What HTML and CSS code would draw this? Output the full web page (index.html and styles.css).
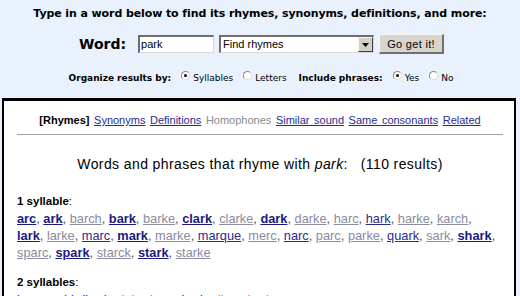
FILE: index.html
```html
<!DOCTYPE html>
<html>
<head>
<meta charset="utf-8">
<link rel="stylesheet" href="styles.css">
</head>
<body>
<div class="top">
  <div class="title">Type in a word below to find its rhymes, synonyms, definitions, and more:</div>
  <div class="searchrow">
    <span class="label">Word:</span>
    <span class="textbox">park</span>
    <span class="select"><span class="seltext">Find rhymes</span><span class="selbtn"><svg width="7" height="4" viewBox="0 0 7 4"><path d="M0 0H7L3.5 4Z" fill="#000"/></svg></span></span>
    <span class="button">Go get it!</span>
  </div>
  <div class="optrow">
    <span class="optlabel">Organize results by:</span>
    <span class="opt"><span class="radio on"></span>Syllables</span>
    <span class="opt"><span class="radio"></span>Letters</span>
    <span class="optlabel second">Include phrases:</span>
    <span class="opt"><span class="radio on"></span>Yes</span>
    <span class="opt"><span class="radio"></span>No</span>
  </div>
</div>
<div class="results">
  <div class="nav">
    <b class="current">[Rhymes]</b>
    <a class="navlink" href="#">Synonyms</a>
    <a class="navlink" href="#">Definitions</a>
    <span class="navoff">Homophones</span>
    <a class="navlink" href="#">Similar sound</a>
    <a class="navlink" href="#">Same consonants</a>
    <a class="navlink" href="#">Related</a>
  </div>
  <div class="sep"></div>
  <div class="heading">Words and phrases that rhyme with <i>park</i>: &nbsp;&nbsp;(110 results)</div>
  <div class="group">
    <div class="glabel"><b>1 syllable</b>:</div>
    <div class="words"><a class="w1" href="#">arc</a>, <a class="w1" href="#">ark</a>, <a class="w3" href="#">barch</a>, <a class="w1" href="#">bark</a>, <a class="w3" href="#">barke</a>, <a class="w1" href="#">clark</a>, <a class="w3" href="#">clarke</a>, <a class="w1" href="#">dark</a>, <a class="w3" href="#">darke</a>, <a class="w3" href="#">harc</a>, <a class="w2" href="#">hark</a>, <a class="w3" href="#">harke</a>, <a class="w3" href="#">karch</a>,<br><a class="w1" href="#">lark</a>, <a class="w3" href="#">larke</a>, <a class="w2" href="#">marc</a>, <a class="w1" href="#">mark</a>, <a class="w3" href="#">marke</a>, <a class="w2" href="#">marque</a>, <a class="w3" href="#">merc</a>, <a class="w2" href="#">narc</a>, <a class="w3" href="#">parc</a>, <a class="w3" href="#">parke</a>, <a class="w2" href="#">quark</a>, <a class="w3" href="#">sark</a>, <a class="w1" href="#">shark</a>,<br><a class="w3" href="#">sparc</a>, <a class="w1" href="#">spark</a>, <a class="w3" href="#">starck</a>, <a class="w1" href="#">stark</a>, <a class="w3" href="#">starke</a></div>
  </div>
  <div class="group">
    <div class="glabel"><b>2 syllables</b>:</div>
    <div class="words"><a class="w2" href="#">barque</a>, <a class="w2" href="#">birdbark</a>, <a class="w3" href="#">debark</a>, <a class="w2" href="#">embark</a>, <a class="w3" href="#">disembark</a></div>
  </div>
</div>
</body>
</html>
```
FILE: styles.css
```css
html, body {
  margin: 0;
  padding: 0;
}
body {
  background: #e8f1fc;
  font-family: "DejaVu Sans", Verdana, sans-serif;
  color: #000;
  width: 520px;
  height: 296px;
  overflow: hidden;
}
.top {
  display: flex;
  flex-direction: column;
  align-items: center;
}
.title {
  font-weight: bold;
  font-size: 11px;
  line-height: 14px;
  margin-top: 7px;
  letter-spacing: -0.1px;
}
.searchrow {
  display: flex;
  align-items: center;
  margin-top: 13px;
  height: 20px;
  padding-left: 3px;
}
.label {
  font-weight: bold;
  font-size: 14px;
  margin-right: 12px;
}
.textbox {
  box-sizing: border-box;
  width: 76px;
  height: 18px;
  background: #fff;
  border-top: 2px solid #6e6e6e;
  border-left: 2px solid #6e6e6e;
  border-bottom: 1px solid #d8d8d8;
  border-right: 1px solid #d8d8d8;
  font-family: "Liberation Sans", Arial, sans-serif;
  font-size: 11px;
  line-height: 14px;
  padding-left: 1px;
  margin-right: 5px;
}
.select {
  box-sizing: border-box;
  width: 155px;
  height: 18px;
  background: #fff;
  border-top: 2px solid #6e6e6e;
  border-left: 2px solid #6e6e6e;
  border-bottom: 1px solid #d8d8d8;
  border-right: 1px solid #d8d8d8;
  display: flex;
  margin-right: 5px;
}
.seltext {
  flex: 1;
  font-family: "Liberation Sans", Arial, sans-serif;
  font-size: 11px;
  line-height: 14px;
  padding-left: 2px;
}
.selbtn {
  box-sizing: border-box;
  width: 15px;
  height: 15px;
  background: #d4d0c8;
  border-top: 1px solid #f4f4f4;
  border-left: 1px solid #f4f4f4;
  border-right: 1px solid #404040;
  border-bottom: 1px solid #404040;
  display: flex;
  align-items: center;
  justify-content: center;
}
.button {
  box-sizing: border-box;
  width: 65px;
  height: 20px;
  background: #d8d5ce;
  border-top: 1px solid #f4f4f4;
  border-left: 1px solid #f4f4f4;
  border-right: 2px solid #707070;
  border-bottom: 2px solid #707070;
  font-family: "Liberation Sans", Arial, sans-serif;
  font-size: 11px;
  letter-spacing: 0.3px;
  display: flex;
  align-items: center;
  justify-content: center;
}
.optrow {
  display: flex;
  align-items: center;
  margin-top: 18px;
  font-size: 9px;
  line-height: 12px;
  padding-left: 2px;
}
.optlabel {
  font-weight: bold;
  margin-right: 10px;
}
.optlabel.second {
  margin-left: 2px;
}
.opt {
  display: flex;
  align-items: center;
  margin-right: 10px;
}
.opt:last-child {
  margin-right: 0;
}
.radio {
  box-sizing: border-box;
  width: 9px;
  height: 9px;
  border-radius: 50%;
  background: #fff;
  border: 1px solid #8a8a8a;
  border-right-color: #ddd;
  border-bottom-color: #ddd;
  margin-right: 3px;
  position: relative;
  top: -3px;
}
.radio.on::after {
  content: "";
  position: absolute;
  left: 2px;
  top: 2px;
  width: 3px;
  height: 3px;
  border-radius: 50%;
  background: #000;
}
.results {
  margin: 14px 4px 0 2px;
  border: 2px solid #000;
  border-top-width: 3px;
  background: #fff;
  padding: 0 11px 0 13px;
  height: 300px;
  font-family: "Liberation Sans", Arial, sans-serif;
}
.nav {
  text-align: center;
  font-size: 11px;
  line-height: 14px;
  margin-top: 12px;
  word-spacing: 1.5px;
}
.current {
  color: #000;
}
.navlink {
  color: #2b2b8c;
  text-decoration: underline;
}
.navoff {
  color: #8a8a8a;
}
.sep {
  height: 1px;
  background: #a0a0a0;
  margin-top: 7px;
}
.heading {
  text-align: center;
  font-size: 14px;
  line-height: 16px;
  margin-top: 21px;
  letter-spacing: 0.4px;
}
.group {
  margin-top: 20px;
}
.glabel {
  font-size: 11.5px;
  line-height: 18px;
}
.words {
  font-size: 12.8px;
  line-height: 17px;
  color: #555;
}
.words a {
  text-decoration: underline;
}
.w1 {
  color: #1a1a80;
  font-weight: bold;
}
.w2 {
  color: #2b2b8c;
}
.w3 {
  color: #8a8aa0;
}
.group + .group {
  margin-top: 12px;
}
```
